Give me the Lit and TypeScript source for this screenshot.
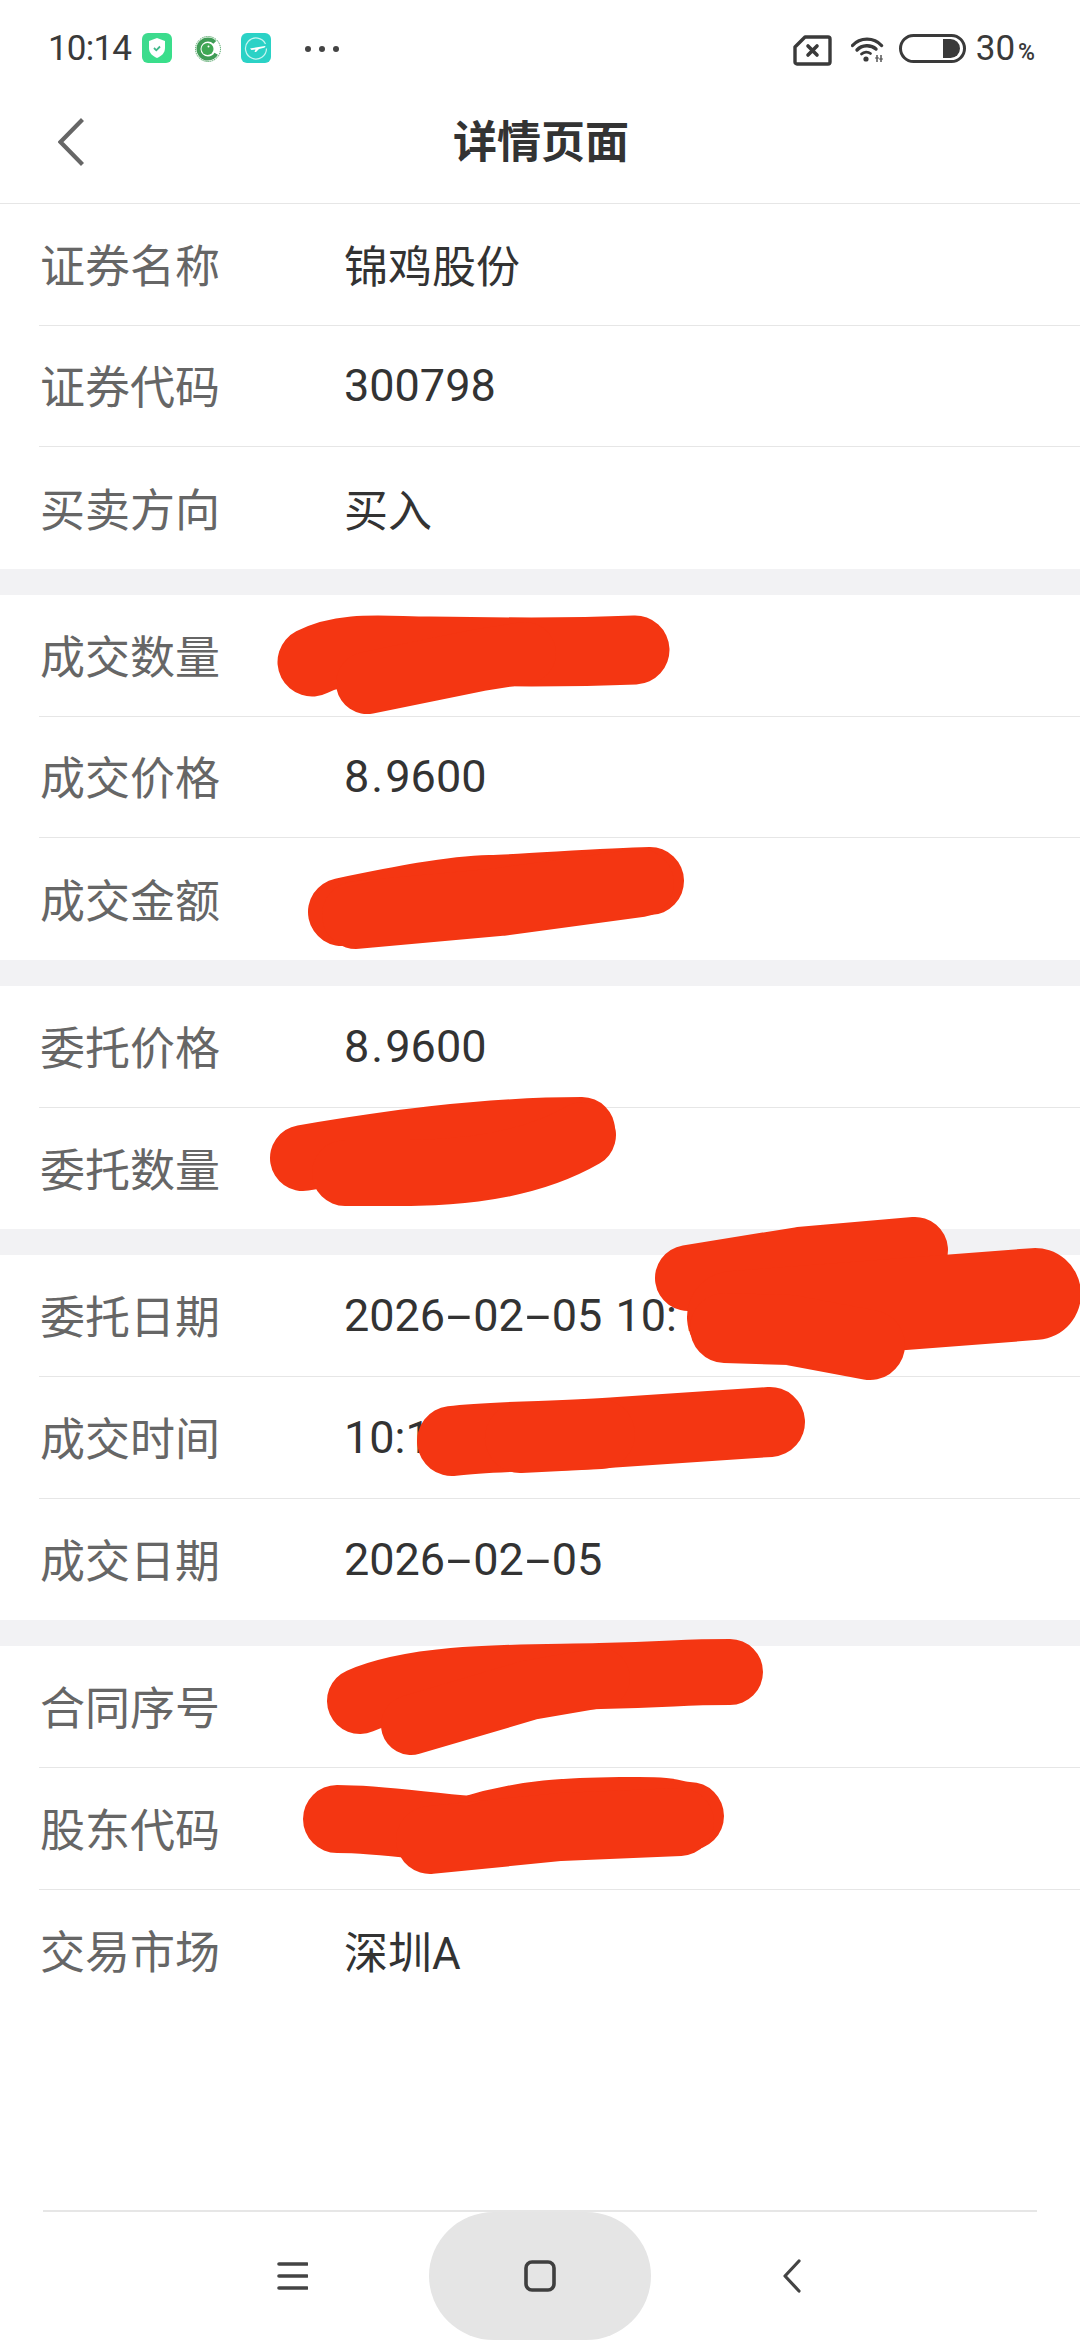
import { LitElement, html, svg, css, TemplateResult } from 'lit';
import { customElement } from 'lit/decorators.js';

interface Row {
  label: string;
  value?: string;
}

const GROUPS: Row[][] = [
  [
    { label: '证券名称', value: '锦鸡股份' },
    { label: '证券代码', value: '300798' },
    { label: '买卖方向', value: '买入' },
  ],
  [
    { label: '成交数量' },
    { label: '成交价格', value: '8.9600' },
    { label: '成交金额' },
  ],
  [
    { label: '委托价格', value: '8.9600' },
    { label: '委托数量' },
  ],
  [
    { label: '委托日期', value: '2026-02-05 10:1' },
    { label: '成交时间', value: '10:1' },
    { label: '成交日期', value: '2026-02-05' },
  ],
  [
    { label: '合同序号' },
    { label: '股东代码' },
    { label: '交易市场', value: '深圳A' },
  ],
];

// marker strokes that hide private values: [path, width]
const SCRIBBLES: [string, number][] = [
  ['M312 662C345 645 385 651 430 651S540 654 635 650', 69],
  ['M367 683L480 660L525 653', 62],
  ['M342 912C400 900 450 890 490 889S600 882 650 881', 68],
  ['M356 915L500 902L640 883', 68],
  ['M303 1158C380 1145 480 1130 582 1130', 66],
  ['M345 1173C420 1173 510 1177 583 1135', 66],
  ['M688 1278L800 1260L915 1250', 66],
  ['M733 1317L1035 1294', 92],
  ['M725 1328L790 1330L870 1345', 70],
  ['M452 1441C500 1435 560 1437 620 1432L770 1422', 70],
  ['M520 1438L600 1434', 70],
  ['M360 1701C420 1675 520 1678 600 1676S680 1672 730 1672', 66],
  ['M411 1725L530 1690L600 1678', 60],
  ['M337 1819C380 1819 420 1826 470 1830C530 1812 570 1812 627 1811S670 1816 690 1816', 68],
  ['M430 1840L560 1827L680 1822', 68],
];

@customElement('app-root')
export class AppRoot extends LitElement {
  private renderValue(value?: string): TemplateResult | string {
    if (!value) return '';
    const latin = /^[\d.:\- ]+$/.test(value);
    const tokens = value.split(/([-.])/);
    return html`<span class=${latin ? 'value latin' : 'value'}
      >${tokens.map(t =>
        t === '-'
          ? html`<span class="dash">-</span>`
          : t === '.'
            ? html`<span class="dot">.</span>`
            : t,
      )}</span
    >`;
  }

  private renderStatusBar(): TemplateResult {
    return html`
      <div class="status">
        <span class="clock">10:14</span>
        <svg class="app-icon first" viewBox="0 0 30 30">
          <defs>
            <linearGradient id="g1" x1="0" y1="0" x2="1" y2="1">
              <stop offset="0" stop-color="#3fd98f" />
              <stop offset="1" stop-color="#38e08a" />
            </linearGradient>
          </defs>
          <rect width="30" height="30" rx="6" fill="url(#g1)" />
          <path d="M15 5l8 3v7c0 5-3.500 8-8 10-4.500-2-8-5-8-10V8z" fill="#fff" />
          <path d="M12 15l2.300 2.300L18 13.500" fill="none" stroke="#3fb98a" stroke-width="1.800" />
        </svg>
        <svg class="app-icon second" viewBox="0 0 26 28">
          <circle cx="13" cy="14" r="12.500" fill="none" stroke="#3f9c56" stroke-width="1" stroke-dasharray="1.200 .8" />
          <circle cx="13" cy="14" r="9.500" fill="none" stroke="#3f9c56" stroke-width="4" stroke-dasharray="47 13" stroke-dashoffset="-5" />
          <circle cx="12.500" cy="14" r="6" fill="#3fa854" />
          <circle cx="13.500" cy="11.500" r="1" fill="#fff" />
        </svg>
        <svg class="app-icon third" viewBox="0 0 30 30">
          <rect width="30" height="30" rx="6" fill="#2bd2c6" />
          <path d="M24.500 11A10.500 10.500 0 1 0 25.500 15.500" fill="none" stroke="#c8f5f0" stroke-width="1.200" />
          <path d="M9 15.500l15-2.500c1 .5 0 1.500-1 1.800l-5 1.200-3 3h-1.500l1-2.500-4 .5z" fill="#fff" />
        </svg>
        <span class="dots"><i></i><i></i><i></i></span>
        <span class="grow"></span>
        <svg class="sim" viewBox="0 0 39 31">
          <path d="M12 2H35a2 2 0 0 1 2 2V27a2 2 0 0 1-2 2H4a2 2 0 0 1-2-2V12z" fill="none" stroke="#3a3a3a" stroke-width="3.400" stroke-linejoin="round" />
          <path d="M15 11L24 20M24 11L15 20" stroke="#3a3a3a" stroke-width="3.600" stroke-linecap="round" />
        </svg>
        <svg class="wifi" viewBox="0 0 33 27">
          <path d="M1.500 10.500C9 2 23 2 30.500 10.500" fill="none" stroke="#3a3a3a" stroke-width="3.400" stroke-linecap="round" />
          <path d="M6 15C11 9.500 20 9.500 25 14" fill="none" stroke="#3a3a3a" stroke-width="3.400" stroke-linecap="round" />
          <path d="M10.500 19C13 16.500 17 16.500 19.500 18.500" fill="none" stroke="#3a3a3a" stroke-width="2.800" stroke-linecap="round" />
          <circle cx="15" cy="24" r="2.600" fill="#3a3a3a" />
          <path d="M26 20V27M30 20V27" stroke="#555" stroke-width="1.500" />
          <path d="M24 23h4M28 24h4" stroke="#555" stroke-width="1" />
        </svg>
        <span class="battery"><i></i></span>
        <span class="pct">30<small>%</small></span>
      </div>
    `;
  }

  private renderNav(): TemplateResult {
    return html`
      <div class="nav">
        <div class="nav-cell">
          <svg class="nav-menu" width="32" height="32" viewBox="0 0 32 32">
            <path d="M3 4H31M3 16H31M3 28H31" stroke="#444" stroke-width="3.600" stroke-linecap="round" />
          </svg>
        </div>
        <div class="nav-cell home">
          <svg width="34" height="34" viewBox="0 0 34 34">
            <rect x="3" y="3" width="28" height="28" rx="6" fill="none" stroke="#3f3f3f" stroke-width="3.600" />
          </svg>
        </div>
        <div class="nav-cell">
          <svg class="nav-back" width="20" height="34" viewBox="0 0 20 34">
            <path d="M17 2L3 17L17 32" fill="none" stroke="#444" stroke-width="3.200" stroke-linecap="round" stroke-linejoin="round" />
          </svg>
        </div>
      </div>
    `;
  }

  render(): TemplateResult {
    return html`
      <div class="page">
        ${this.renderStatusBar()}
        <header class="title-bar">
          <svg class="back" width="26" height="48" viewBox="0 0 26 48">
            <path d="M24.500 1.500L2.500 24L24.500 46.500" fill="none" stroke="#666" stroke-width="4.200" />
          </svg>
          <h1>详情页面</h1>
        </header>
        ${GROUPS.map(
          group => html`
            <section class="group">
              ${group.map(
                row => html`
                  <div class="row">
                    <span class="label">${row.label}</span>
                    ${this.renderValue(row.value)}
                  </div>
                `,
              )}
            </section>
          `,
        )}
        <div class="spacer"></div>
        ${this.renderNav()}
        <svg class="scribble" viewBox="0 0 1080 2340" width="1080" height="2340">
          ${SCRIBBLES.map(
            ([d, w]) => svg`<path d=${d} fill="none" stroke="#f43612" stroke-width=${w} stroke-linecap="round" stroke-linejoin="round" />`,
          )}
        </svg>
      </div>
    `;
  }

  static styles = css`
    :host {
      display: block;
      font-family: Roboto, 'Noto Sans CJK SC', sans-serif;
    }
    .page {
      position: relative;
      width: 1080px;
      height: 2340px;
      overflow: hidden;
      display: flex;
      flex-direction: column;
      background: #fff;
    }
    .status {
      height: 98px;
      box-sizing: border-box;
      padding: 33px 45px 0 48px;
      display: flex;
      align-items: flex-start;
      color: #3a3a3a;
    }
    .clock {
      font-size: 35px;
      line-height: 32px;
      letter-spacing: -0.8px;
      width: 94px;
    }
    .app-icon {
      display: block;
      width: 30px;
      height: 30px;
    }
    .app-icon.second {
      width: 26px;
      height: 28px;
      margin: 2px 20px 0 23px;
    }
    .dots {
      display: flex;
      gap: 8px;
      margin: 13px 0 0 34px;
    }
    .dots i {
      width: 6px;
      height: 6px;
      border-radius: 50%;
      background: #444;
    }
    .grow {
      flex: 1;
    }
    .sim {
      width: 39px;
      height: 31px;
      margin: 2px 19px 0 0;
    }
    .wifi {
      width: 33px;
      height: 27px;
      margin: 2px 15px 0 0;
    }
    .battery {
      box-sizing: border-box;
      width: 67px;
      height: 29px;
      margin-top: 1px;
      border: 3px solid #3a3a3a;
      border-radius: 15px;
      display: flex;
      justify-content: flex-end;
      padding: 2px 3px 2px 0;
    }
    .battery i {
      width: 17px;
      background: #3a3a3a;
      border-radius: 0 10px 10px 0;
    }
    .pct {
      font-size: 35px;
      line-height: 32px;
      margin-left: 10px;
      display: flex;
      align-items: baseline;
    }
    .pct small {
      font-size: 23px;
      font-weight: 500;
      margin-left: 3px;
    }
    .title-bar {
      position: relative;
      height: 106px;
      box-sizing: border-box;
      border-bottom: 1px solid #e6e6e6;
      display: flex;
      align-items: center;
      justify-content: center;
      padding: 0 0 16px 2px;
    }
    .back {
      position: absolute;
      left: 58px;
      top: 20px;
    }
    h1 {
      margin: 0;
      font-size: 44px;
      font-weight: 700;
      color: #333;
      line-height: 60px;
    }
    .group + .group {
      border-top: 26px solid #f2f2f4;
    }
    .row {
      box-sizing: border-box;
      height: 121.67px;
      margin-left: 39px;
      display: flex;
      align-items: center;
      border-bottom: 1px solid #e6e6e6;
    }
    .row:last-child {
      border-bottom: none;
    }
    .label {
      box-sizing: border-box;
      width: 305px;
      padding-left: 1px;
      margin-bottom: 2px;
      color: #666;
      font-size: 45px;
    }
    .value {
      color: #333;
      font-size: 44px;
      white-space: pre;
    }
    .value.latin {
      font-size: 45px;
      word-spacing: 2px;
    }
    .dash {
      display: inline-block;
      width: 28px;
      text-align: center;
      transform: scaleX(2);
    }
    .dot {
      display: inline-block;
      width: 16px;
      text-align: center;
    }
    .spacer {
      flex: 1;
    }
    .nav {
      height: 130px;
      margin: 0 43px;
      border-top: 2px solid #e6e6e6;
      display: grid;
      grid-template-columns: repeat(3, 250px);
      justify-content: center;
      box-sizing: border-box;
    }
    .nav-cell {
      display: flex;
      align-items: center;
      justify-content: center;
      position: relative;
    }
    .nav-menu {
      margin-left: 3px;
    }
    .nav-back {
      margin-left: 3px;
    }
    .home {
      justify-self: center;
      width: 222px;
      background: #e5e5e5;
      border-radius: 66px / 65px;
    }
    .scribble {
      position: absolute;
      left: 0;
      top: 0;
      pointer-events: none;
    }
  `;
}
